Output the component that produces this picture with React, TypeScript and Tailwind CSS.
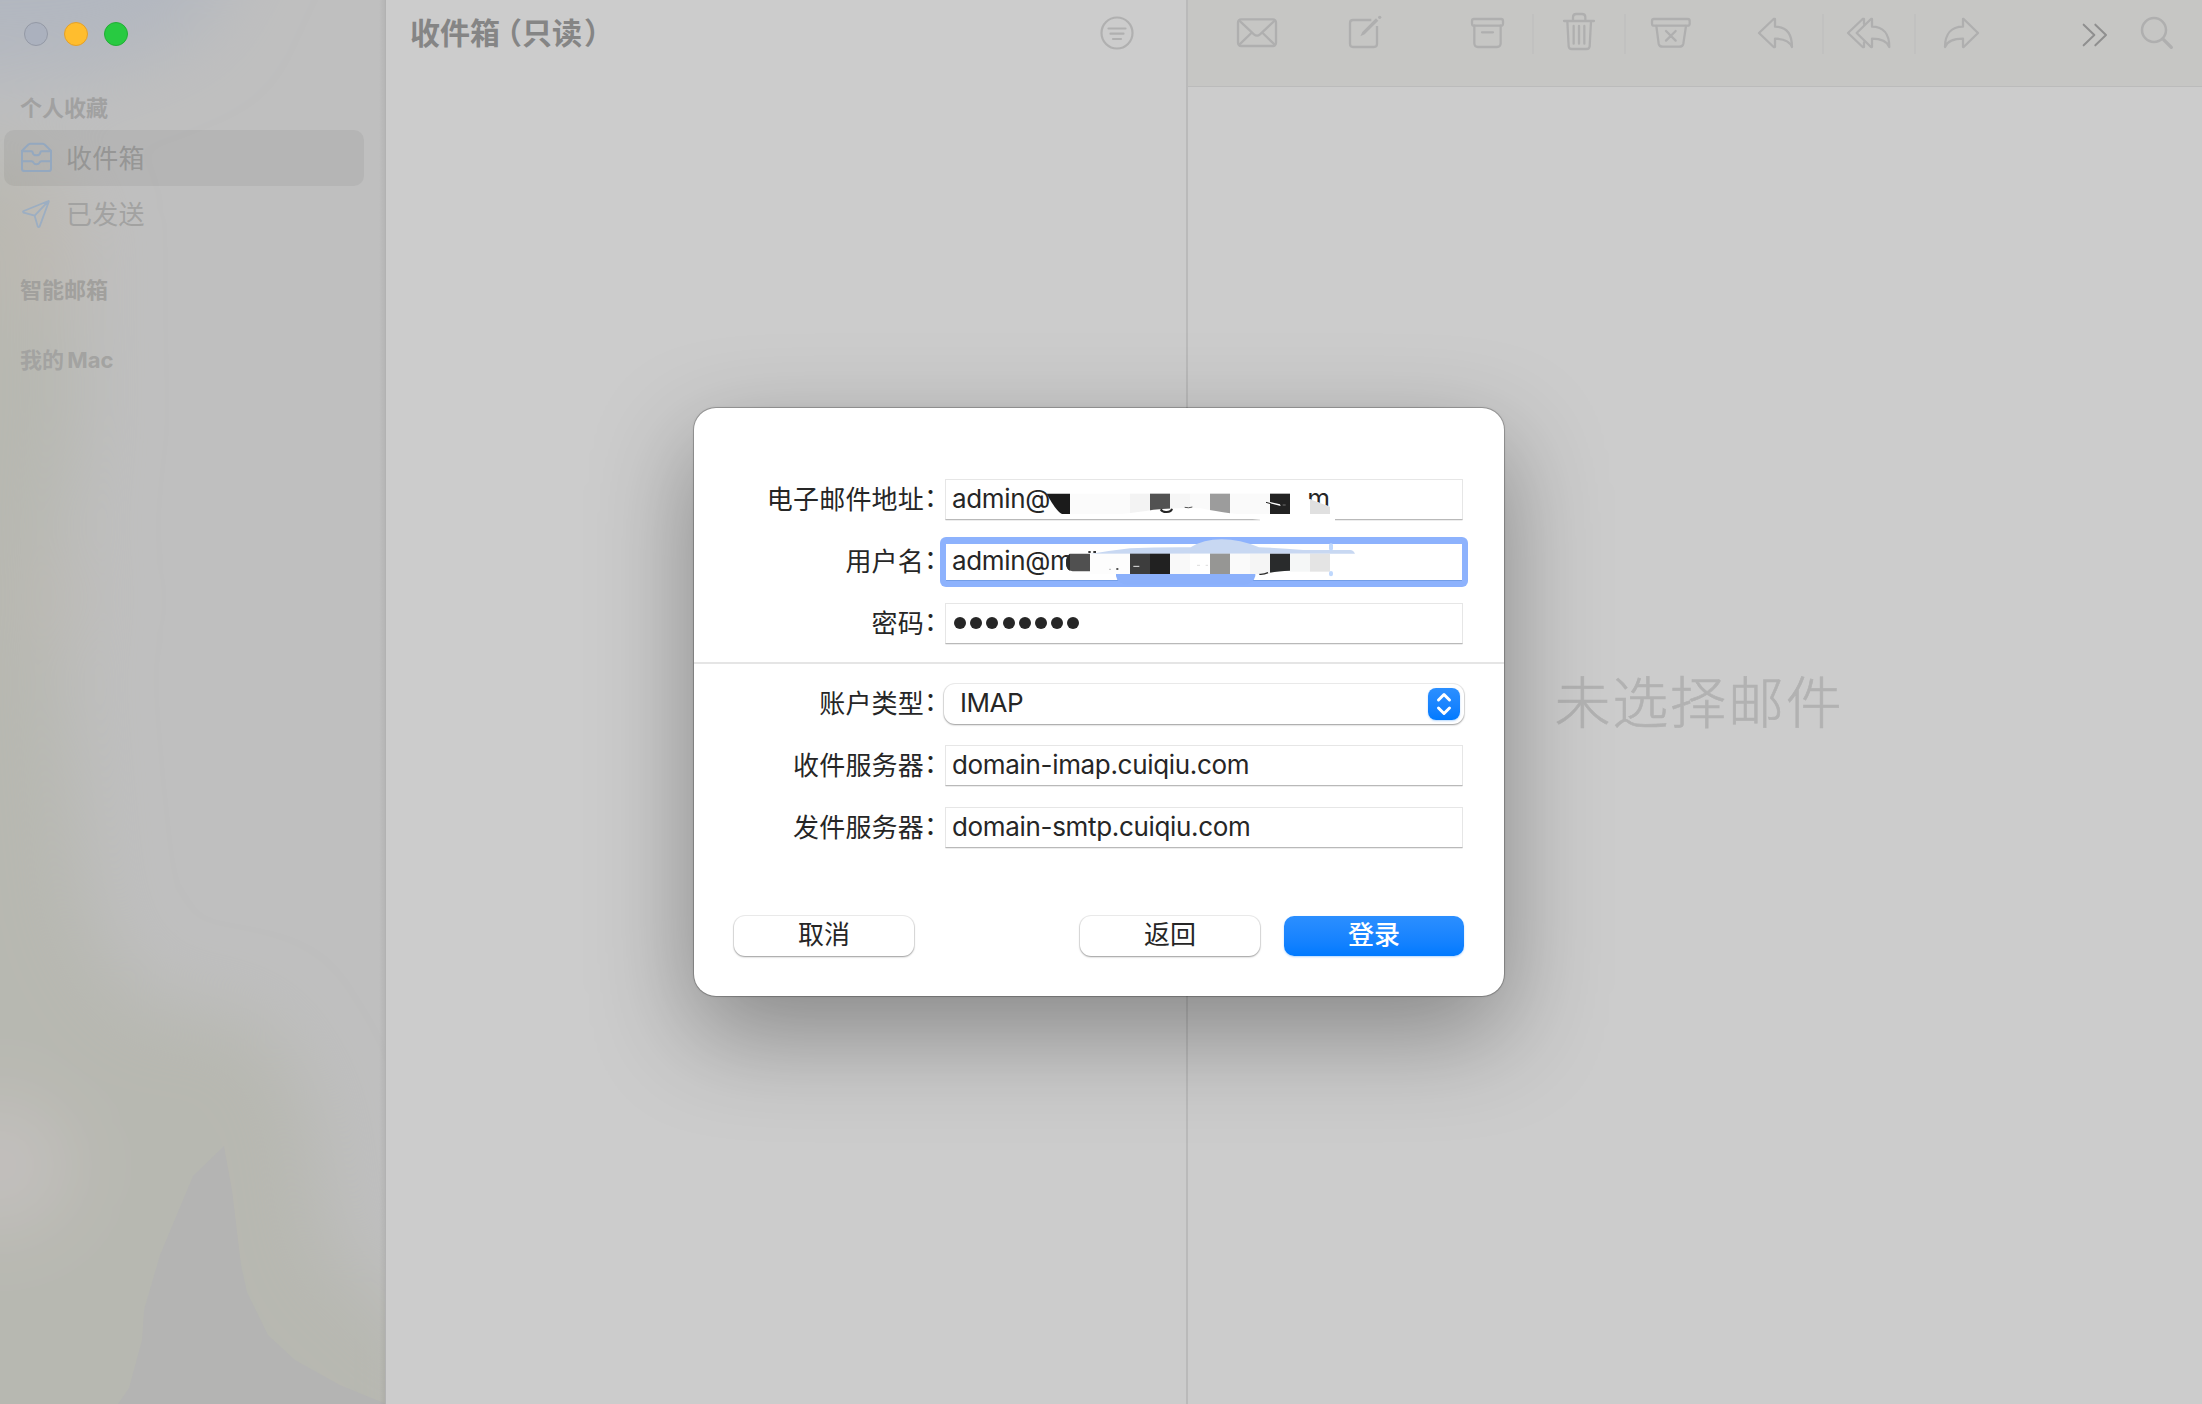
import React from 'react';

const SANS = 'font-["Inter","Noto_Sans_CJK_SC",sans-serif]';

function ToolIcon({ x, w, className, children }: { x: number; w: number; className: string; children: React.ReactNode }) {
  return (
    <svg
      className={`shrink-0 ${className}`}
      width={w}
      height={55}
      viewBox={`${x} 0 ${w * 3} 165`}
      fill="none"
      stroke="currentColor"
      strokeWidth={6.8}
      strokeLinecap="round"
      strokeLinejoin="round"
    >
      {children}
    </svg>
  );
}

function Separator({ className }: { className: string }) {
  return <div className={`mt-3.5 h-10 w-0.5 shrink-0 bg-[#c1c1c0] ${className}`} />;
}

function Row({ label, children }: { label: string; children: React.ReactNode }) {
  return (
    <div className="flex h-[41px] items-center">
      <span className="w-[230px] text-right tracking-[0.2px] whitespace-nowrap">{label}</span>
      <span className="w-[21px] pb-1 whitespace-nowrap">：</span>
      {children}
    </div>
  );
}

function Field({ children }: { children?: React.ReactNode }) {
  return (
    <div className="flex h-[41px] w-[518px] items-center border border-[#e6e6e6] border-b-[#b9b9b9] bg-white pb-0.5 pl-1.5 tracking-[-0.33px] shadow-[0_1px_0_-0.5px_#dcdcdc]">
      {children}
    </div>
  );
}

function Sidebar() {
  return (
    <aside className="relative h-full w-[386px] shrink-0 overflow-hidden border-r border-[#b2b2b2] bg-[#bfbfbf]">
      {/* Wallpaper tint showing through the sidebar */}
      <svg className="absolute inset-0" width="386" height="1404" viewBox="0 0 386 1404">
        <defs>
          <filter id="soft" x="-50%" y="-50%" width="200%" height="200%">
            <feGaussianBlur stdDeviation="38" />
          </filter>
        </defs>
        <g filter="url(#soft)">
          <path d="M-120 -120H270L200 30L100 70L-120 80Z" fill="#b2b7c0" />
          <path d="M-120 170L40 150L75 240L80 420L60 600L75 780L90 920L140 1000L260 1020L310 1100L330 1250L440 1350V1520H-120Z" fill="#b7b8b1" />
          <ellipse cx="-5" cy="1165" rx="75" ry="65" fill="#c3c0bd" />
          <ellipse cx="35" cy="250" rx="45" ry="70" fill="#bdb9b2" />
          <ellipse cx="50" cy="600" rx="30" ry="50" fill="#bcb9b3" />
        </g>
        <path d="M224 1146L193 1176L160 1255L144 1310L142 1340L129 1388L118 1404H386L340 1385L295 1360L268 1335L247 1292L241 1265L232 1190Z" fill="#b4b4b3" />
      </svg>
      <div className="absolute inset-y-0 right-0 w-1.5 bg-linear-to-r from-transparent to-black/5" />

      <div className="relative">
        <div className="flex gap-4 pt-[22px] pl-6">
          <span className="size-6 rounded-full border border-[#9499a5] bg-[#abb1be]" />
          <span className="size-6 rounded-full border border-[#e3a02a] bg-[#ffbd2e]" />
          <span className="size-6 rounded-full border border-[#22ae35] bg-[#28ca41]" />
        </div>

        <h2 className="mt-[46px] ml-5 h-8 text-[22px] leading-8 font-bold text-[#a1a1a1]">个人收藏</h2>
        <div className="mt-1.5 ml-1 flex h-14 w-[360px] items-center rounded-[10px] bg-black/5 pl-4">
          <svg width="32" height="32" viewBox="0 0 96 96" fill="none" stroke="#94a8bf" strokeWidth="6" strokeLinecap="round" strokeLinejoin="round">
            <path d="M6 26L26 7Q28 5 32 5H67Q71 5 73 7L93 26V80Q93 87 86 87H13Q6 87 6 80Z" />
            <path d="M6 28H34Q38 28 38 32Q40 40 49 40Q59 40 61 32Q61 28 65 28H93M6 58H35Q39 58 40 61Q43 67 49 67Q56 67 59 61Q60 58 64 58H93" />
          </svg>
          <span className="ml-3.5 text-[26px] tracking-[0.3px] text-[#969695]">收件箱</span>
        </div>
        <div className="ml-1 flex h-14 w-[360px] items-center pl-4">
          <svg width="32" height="32" viewBox="0 0 96 96" fill="none" stroke="#9caec2" strokeWidth="5.5" strokeLinecap="round" strokeLinejoin="round">
            <path d="M85 9L11 39Q7 41 11 44L44 53L53 85Q56 89 59 85L86 12Q87 8 85 9ZM44 53L84 11" />
          </svg>
          <span className="ml-3.5 text-[26px] tracking-[0.3px] text-[#a2a2a1]">已发送</span>
        </div>
        <h2 className="mt-8 ml-5 h-8 text-[22px] leading-8 font-bold text-[#a1a09d]">智能邮箱</h2>
        <h2 className="mt-[38px] ml-5 h-8 text-[22px] leading-8 font-bold [word-spacing:-2px] text-[#a3a3a1]">我的 Mac</h2>
      </div>
    </aside>
  );
}

function MessageList() {
  return (
    <section className="h-full w-[802px] shrink-0 border-r-2 border-[#bababa] bg-[#cccccc]">
      <header className="flex h-[66px] items-center justify-between pr-[52px] pl-6">
        <h1 className="text-[30px] font-bold whitespace-nowrap text-[#858585]">
          收件箱<span className="ml-[7px] [font-feature-settings:'halt']">（</span>只读<span className="ml-0.5">）</span>
        </h1>
        <svg width="34" height="34" viewBox="0 0 34 34" fill="none" stroke="#b0b0b0" strokeWidth="2.2" strokeLinecap="round">
          <circle cx="17" cy="17" r="15.5" />
          <path d="M8.5 12.5H25.5M10.5 17.7H23.5M13 23H21" />
        </svg>
      </header>
    </section>
  );
}

function Viewer() {
  return (
    <section className="flex h-full flex-1 flex-col bg-[#cccccc]">
      <div className="flex h-[87px] border-b border-[#bbbbbb] bg-[#c6c6c4] text-[#afafaf]">
        <ToolIcon x={165} w={44} className="ml-[47px]">
          <rect x="174" y="58" width="114" height="80" rx="9" />
          <path d="M178 62L222 103Q231 111 240 103L284 62M178 134L214 99M284 134L248 99" />
        </ToolIcon>
        <ToolIcon x={501} w={37} className="ml-[68px]">
          <path d="M574 60H519Q510 60 510 69V132Q510 141 519 141H582Q591 141 591 132V78" strokeLinecap="butt" />
          <path d="M541 109L547 96L588 55L595 62L554 103Z" fill="currentColor" stroke="none" />
          <circle cx="599" cy="52" r="5" fill="currentColor" stroke="none" />
        </ToolIcon>
        <ToolIcon x={867} w={37} className="ml-[85px]">
          <rect x="876" y="57" width="93" height="20" rx="6" />
          <path d="M883 77V130Q883 141 894 141H951Q962 141 962 130V77M906 97H939" />
        </ToolIcon>
        <Separator className="ml-[26px]" />
        <ToolIcon x={1143} w={36} className="ml-[27px]">
          <path d="M1152 63H1242M1179 62V52Q1179 42 1189 42H1206Q1216 42 1216 52V62M1162 64L1166 139Q1167 147 1175 147H1220Q1228 147 1229 139L1233 64M1181 78V131M1197 78V131M1213 78V131" />
        </ToolIcon>
        <Separator className="ml-[27px]" />
        <ToolIcon x={1407} w={44} className="ml-[23px]">
          <rect x="1416" y="57" width="113" height="20" rx="6" />
          <path d="M1429 78L1436 131Q1438 140 1448 140H1498Q1508 140 1510 131L1518 78M1458 93L1487 122M1487 93L1458 122" />
        </ToolIcon>
        <ToolIcon x={198} w={39} className="ml-[63px]">
          <path d="M255 57V80C290 80 306 103 306 141C298 121 280 116 255 116V141H251L207 99L251 57Z" />
        </ToolIcon>
        <Separator className="ml-[27px]" />
        <ToolIcon x={465} w={48} className="ml-[21px]">
          <path d="M546 57V80C580 80 598 103 598 141C590 121 572 116 546 116V141H543L500 99L543 57Z" />
          <path d="M522 72V57H518L474 99L518 141H522V127" />
        </ToolIcon>
        <Separator className="ml-[21px]" />
        <ToolIcon x={756} w={39} className="ml-[26px]">
          <path d="M819 57V80C784 80 765 103 765 141C773 121 793 116 819 116V141H821L864 99L821 57Z" />
        </ToolIcon>
        <ToolIcon x={1173} w={28} className="ml-[100px] text-[#8f8f8f]">
          <path d="M1181 74L1213 105L1181 136M1216 74L1248 105L1216 136" strokeWidth="6" />
        </ToolIcon>
        <ToolIcon x={1347} w={36} className="ml-[30px]">
          <circle cx="1392" cy="90" r="36" strokeWidth="7.5" />
          <path d="M1420 118L1444 142" strokeWidth="10" />
        </ToolIcon>
      </div>
      <div className="flex flex-1 items-center justify-center pb-[86px] pl-2">
        <p className="text-[56px] font-light tracking-[1.8px] text-[#b2b2b2] [-webkit-text-stroke:0.6px_#b2b2b2]">未选择邮件</p>
      </div>
    </section>
  );
}

/* Censor strokes smeared over the two address fields */
function Redaction() {
  return (
    <svg className="absolute top-[42px] left-[346px]" width="480" height="220" viewBox="0 0 1440 660">
      {/* e-mail address */}
      <rect x="90" y="131" width="180" height="61" fill="#fbfbfb" />
      <path d="M20 131H90V192H66Q50 186 20 131Z" fill="#1b1b1b" />
      <rect x="270" y="131" width="60" height="61" fill="#f3f3f3" />
      <rect x="330" y="131" width="60" height="61" fill="#525252" />
      <rect x="390" y="131" width="60" height="61" fill="#f6f6f6" />
      <rect x="450" y="131" width="60" height="61" fill="#fafafa" />
      <rect x="510" y="131" width="60" height="61" fill="#9c9c9c" />
      <rect x="570" y="131" width="120" height="61" fill="#fafafa" />
      <rect x="690" y="131" width="60" height="61" fill="#222222" />
      <path d="M235 193Q300 186 340 179Q420 172 480 175Q530 184 570 190L600 193V203L660 209V214H885V193Z" fill="#ffffff" />
      <path d="M362 178Q368 187 380 186Q394 185 396 176" fill="none" stroke="#262626" strokeWidth="6" />
      <path d="M434 172Q446 175 457 171" fill="none" stroke="#555555" strokeWidth="3" />
      <path d="M690 156L720 163L722 168L690 160Z" fill="#ffffff" />
      <path d="M678 157L692 161" stroke="#222222" strokeWidth="3" />
      <path d="M728 165H737" stroke="#999999" strokeWidth="2" />
      <text x="802" y="173" fontSize="78" fill="#262626">m</text>
      <path d="M800 145L810 148L870 170V192H800Z" fill="#ffffff" />
      <path d="M810 148L870 170V192H810Z" fill="#e0e0e0" />

      {/* user name */}
      <path d="M150 312Q210 302 270 295Q360 291 452 292Q490 268 545 268Q600 268 657 292Q720 293 790 300H930Q941 301 945 311Z" fill="#c8d8f2" />
      <path d="M228 372H646V378Q640 403 610 404H262Q232 402 228 378Z" fill="#8bb0fb" />
      <path d="M90 311H150V364H98Q78 362 78 340Q78 318 90 311Z" fill="#505050" />
      <path d="M90 311Q78 318 78 338Q78 356 90 362Z" fill="#2b2b2b" />
      <rect x="150" y="311" width="120" height="61" fill="#fdfdfd" />
      <path d="M145 306H152M160 306H168" stroke="#333333" strokeWidth="6" />
      <path d="M229 357H235" stroke="#333333" strokeWidth="5" />
      <path d="M207 358H213" stroke="#999999" strokeWidth="2" />
      <rect x="270" y="311" width="60" height="61" fill="#3d3d3d" />
      <rect x="330" y="311" width="60" height="61" fill="#212121" />
      <path d="M280 349H298" stroke="#e5e5e5" strokeWidth="3" />
      <rect x="390" y="311" width="60" height="61" fill="#f9f9f9" />
      <rect x="450" y="311" width="60" height="61" fill="#ffffff" />
      <path d="M471 346H480M497 346H504" stroke="#cccccc" strokeWidth="2" />
      <rect x="510" y="311" width="60" height="61" fill="#969694" />
      <rect x="570" y="311" width="60" height="61" fill="#fafafa" />
      <rect x="630" y="311" width="60" height="61" fill="#f5f5f5" />
      <path d="M690 311H750V362Q715 363 690 368Z" fill="#292b2c" />
      <path d="M658 373Q672 374 684 368" fill="none" stroke="#262626" strokeWidth="4" />
      <rect x="750" y="311" width="60" height="54" fill="#f5f7f7" />
      <rect x="810" y="311" width="60" height="54" fill="#e4e4e4" />
      <path d="M873 286V296M873 369V373" stroke="#bfd8fd" strokeWidth="12" strokeLinecap="round" />
    </svg>
  );
}

function LoginDialog() {
  return (
    <div className="relative h-[588px] w-[810px] rounded-[22px] bg-white pt-[71px] text-[26px] text-[#262626] shadow-[0_0_0_1px_rgba(0,0,0,0.2),0_0_3px_rgba(0,0,0,0.15),0_36px_100px_rgba(0,0,0,0.34)]">
      <div className="flex flex-col gap-[21px]">
        <Row label="电子邮件地址">
          <Field>admin@</Field>
        </Row>
        <Row label="用户名">
          <div className="-ml-[5px] flex h-[50px] w-[528px] shrink-0 items-center rounded-md bg-[#8db2fd] px-1.5">
            <div className="flex h-9 w-full items-center bg-white pb-0.5 pl-1.5 tracking-[-0.33px] shadow-[0_1px_0_0_#739de6]">admin@m</div>
          </div>
        </Row>
        <Row label="密码">
          <Field>
            <div className="ml-0.5 flex gap-[4.2px]">
              {[...Array(8)].map((_, i) => (
                <span key={i} className="size-3 rounded-full bg-[#262626]" />
              ))}
            </div>
          </Field>
        </Row>
      </div>

      <div className="mt-[18px] h-0.5 bg-[#e5e5e5]" />

      <div className="mt-[19px] flex flex-col gap-[21px]">
        <Row label="账户类型">
          <div className="-ml-px flex h-10 w-[520px] shrink-0 items-center justify-between rounded-[11px] bg-white pr-1 pl-4 shadow-[0_0_0_1px_rgba(0,0,0,0.07),0_1px_2px_rgba(0,0,0,0.35)]">
            <span className="pb-0.5 tracking-[-0.5px]">IMAP</span>
            <svg className="rounded-lg bg-linear-to-b from-[#2b8fff] to-[#007aff] shadow-[0_1px_2px_rgba(0,122,255,0.3)]" width="32" height="32" viewBox="0 0 32 32" fill="none" stroke="white" strokeWidth="3" strokeLinecap="round" strokeLinejoin="round">
              <path d="M10.5 12L16 6.5L21.5 12M10.5 20L16 25.5L21.5 20" />
            </svg>
          </div>
        </Row>
        <Row label="收件服务器">
          <Field>domain-imap.cuiqiu.com</Field>
        </Row>
        <Row label="发件服务器">
          <Field>domain-smtp.cuiqiu.com</Field>
        </Row>
      </div>

      <div className="mt-[68px] flex gap-6 px-10">
        <button className="mr-auto h-10 w-[180px] rounded-[11px] bg-white pb-0.5 leading-[36px] shadow-[0_0_0_1px_rgba(0,0,0,0.07),0_1px_2px_rgba(0,0,0,0.35)]">取消</button>
        <button className="h-10 w-[180px] rounded-[11px] bg-white pb-0.5 leading-[36px] shadow-[0_0_0_1px_rgba(0,0,0,0.07),0_1px_2px_rgba(0,0,0,0.35)]">返回</button>
        <button className="h-10 w-[180px] rounded-[10px] bg-linear-to-b from-[#2b8fff] to-[#007aff] pb-0.5 leading-[36px] font-medium text-white shadow-[0_1px_2px_rgba(0,122,255,0.3)]">登录</button>
      </div>

      <Redaction />
    </div>
  );
}

export default function App() {
  return (
    <main className={`relative flex h-[1404px] w-[2202px] overflow-hidden ${SANS}`}>
      <Sidebar />
      <MessageList />
      <Viewer />
      <div className="absolute inset-0 flex items-center justify-center pr-1">
        <LoginDialog />
      </div>
    </main>
  );
}
